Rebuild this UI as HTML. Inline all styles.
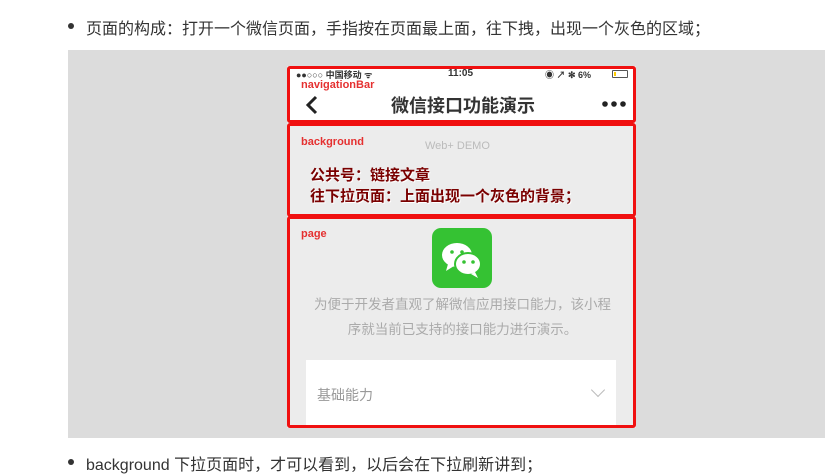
<html><head><style>
body{margin:0;width:825px;height:472px;background:#fff;font-family:"Liberation Sans","Noto Sans CJK SC",sans-serif;position:relative;overflow:hidden}
.a{position:absolute}
.li{font-size:16px;letter-spacing:0;color:#333;white-space:nowrap}
.dot{width:6px;height:6px;border-radius:3px;background:#333}
.box{border:3px solid #f01010;border-radius:3px;box-sizing:border-box}
.lab{font-size:11px;color:#e53030;font-weight:bold}
</style></head><body>
<div class="a dot" style="left:68px;top:23px"></div>
<div class="a li" style="left:86px;top:15px">页面的构成：打开一个微信页面，手指按在页面最上面，往下拽，出现一个灰色的区域；</div>
<div class="a" style="left:68px;top:50px;width:757px;height:388px;background:#dcdcdc"></div>
<div class="a" style="left:287px;top:66px;width:349px;height:362px;background:#ececec"></div>
<div class="a" style="left:289px;top:67px;width:345px;height:54px;background:#fff"></div>
<div class="a box" style="left:287px;top:66px;width:349px;height:57px"></div>
<div class="a box" style="left:287px;top:123px;width:349px;height:94px"></div>
<div class="a box" style="left:287px;top:216px;width:349px;height:212px"></div>
<div class="a" style="left:296px;top:68px;font-size:9px;color:#333;font-weight:bold">●●○○○ 中国移动 ᯤ</div>
<div class="a" style="left:448px;top:68px;font-size:10px;color:#333;font-weight:bold">11:05</div>
<div class="a" style="left:545px;top:68px;font-size:9px;color:#333;font-weight:bold">◉ ↗ ✻ 6%</div>
<div class="a" style="left:612px;top:70px;width:14px;height:6px;border:1px solid #555;border-radius:1px"></div>
<div class="a" style="left:614px;top:72px;width:2px;height:4px;background:#fc0"></div>
<div class="a lab" style="left:301px;top:79px">navigationBar</div>
<svg class="a" style="left:305px;top:95px" width="14" height="20"><path d="M11 2 L3 10 L11 18" stroke="#222" stroke-width="3" fill="none"/></svg>
<div class="a" style="left:391px;top:92px;font-size:18px;color:#333;font-weight:bold">微信接口功能演示</div>
<div class="a" style="left:602px;top:101px;width:24px;height:6px">
<svg width="24" height="6"><circle cx="3" cy="3" r="2.8" fill="#222"/><circle cx="12" cy="3" r="2.8" fill="#222"/><circle cx="21" cy="3" r="2.8" fill="#222"/></svg></div>
<div class="a lab" style="left:301px;top:136px">background</div>
<div class="a" style="left:425px;top:140px;font-size:11px;color:#bbb">Web+ DEMO</div>
<div class="a" style="left:310px;top:165px;font-size:15px;color:#7a0000;font-weight:bold;line-height:21px;text-shadow:1px 1px 0 #fff">公共号：链接文章<br>往下拉页面：上面出现一个灰色的背景；</div>
<div class="a lab" style="left:301px;top:228px">page</div>
<div class="a" style="left:432px;top:228px;width:60px;height:60px;border-radius:9px;background:#35c233">
<svg width="60" height="60"><ellipse cx="25" cy="27" rx="15" ry="12" fill="#fff"/><path d="M16 36 L14 43 L22 38Z" fill="#fff"/><ellipse cx="36" cy="36" rx="13" ry="11" fill="#fff" stroke="#35c233" stroke-width="2"/><path d="M43 44 L46 50 L39 46Z" fill="#fff"/><circle cx="20" cy="24" r="1.8" fill="#35c233"/><circle cx="30" cy="24" r="1.8" fill="#35c233"/><circle cx="32" cy="34" r="1.8" fill="#35c233"/><circle cx="41" cy="34" r="1.8" fill="#35c233"/></svg></div>
<div class="a" style="left:295px;top:292px;width:335px;text-align:center;font-size:13.5px;color:#aaa;line-height:25px">为便于开发者直观了解微信应用接口能力，该小程<br>序就当前已支持的接口能力进行演示。</div>
<div class="a" style="left:306px;top:360px;width:310px;height:65px;background:#fff"></div>
<div class="a" style="left:317px;top:385px;font-size:14px;color:#999">基础能力</div>
<div class="a" style="left:593px;top:385px;width:9px;height:9px;border-right:1px solid #bbb;border-bottom:1px solid #bbb;transform:rotate(45deg)"></div>
<div class="a dot" style="left:68px;top:459px"></div>
<div class="a li" style="left:86px;top:451px">background 下拉页面时，才可以看到，以后会在下拉刷新讲到；</div>
</body></html>
